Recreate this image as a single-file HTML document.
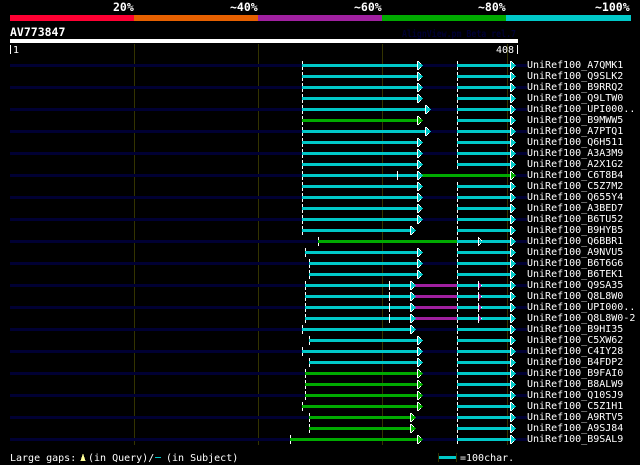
<!DOCTYPE html>
<html><head><meta charset="utf-8">
<style>
html,body{margin:0;padding:0;background:#000}
svg{display:block}
text{font-family:"DejaVu Sans Mono",monospace;font-size:10px;fill:#fff}
.b{font-weight:bold;font-size:11.5px}
.c{fill:#00c8c8}.g{fill:#00aa00}.p{fill:#a020a0}.w{fill:#fff}
</style></head><body>
<svg width="640" height="465" viewBox="0 0 640 465" xmlns="http://www.w3.org/2000/svg" shape-rendering="crispEdges">
<defs>
<rect id="n" x="10" y="0" width="517" height="3" fill="#000033"/>
<rect id="t" x="0" y="-3" width="1" height="9" fill="#fff"/>
<g id="wa"><rect y="-3" width="1" height="9" fill="#fff"/><rect x="1" y="-3" width="1" height="1" fill="#fff"/><rect x="2" y="-2" width="1" height="1" fill="#fff"/><rect x="3" y="-1" width="1" height="1" fill="#fff"/><rect x="4" y="0" width="1" height="1" fill="#fff"/><rect x="1" y="5" width="1" height="1" fill="#fff"/><rect x="2" y="4" width="1" height="1" fill="#fff"/><rect x="3" y="3" width="1" height="1" fill="#fff"/></g>
<g id="ac"><use href="#wa"/><g class="c"><rect x="1" y="-2" width="1" height="7"/><rect x="2" y="-1" width="1" height="5"/><rect x="3" y="0" width="1" height="3"/><rect x="4" y="1" width="2" height="1"/><rect x="4" y="0" width="1" height="3"/></g></g>
<g id="ag"><use href="#wa"/><g class="g"><rect x="1" y="-2" width="1" height="7"/><rect x="2" y="-1" width="1" height="5"/><rect x="3" y="0" width="1" height="3"/><rect x="4" y="1" width="2" height="1"/><rect x="4" y="0" width="1" height="3"/></g></g>
<g id="ap"><rect y="-3" width="1" height="9" fill="#fff"/><rect x="1" y="-1" width="1" height="5" class="p"/><rect x="2" y="0" width="1" height="3" class="p"/><rect x="3" y="1" width="1" height="1" fill="#fff"/></g>
<g id="aq"><rect y="-3" width="1" height="9" fill="#fff"/><rect x="1" y="-2" width="1" height="1" fill="#fff"/><rect x="2" y="-1" width="1" height="1" fill="#fff"/><rect x="3" y="0" width="1" height="1" fill="#fff"/><rect x="1" y="4" width="1" height="1" fill="#fff"/><rect x="2" y="3" width="1" height="1" fill="#fff"/></g>
<g id="s2"><use href="#t" x="457"/><rect x="457" width="53" height="3" class="c"/><use href="#ac" x="510"/></g>
</defs>
<rect width="640" height="465" fill="#000"/>
<rect x="10" y="15" width="124" height="6" fill="#ff0033"/>
<rect x="134" y="15" width="124" height="6" fill="#e66000"/>
<rect x="258" y="15" width="124" height="6" fill="#a020a0"/>
<rect x="382" y="15" width="124" height="6" fill="#00aa00"/>
<rect x="506" y="15" width="125" height="6" fill="#00c8c8"/>
<text class="b" x="113" y="11">20%</text>
<text class="b" x="230" y="11">~40%</text>
<text class="b" x="354" y="11">~60%</text>
<text class="b" x="478" y="11">~80%</text>
<text class="b" x="595" y="11">~100%</text>
<text class="b" x="10" y="36">AV773847</text>
<text x="402" y="37" textLength="114" lengthAdjust="spacingAndGlyphs" style="fill:#000033;font-weight:bold">AlignView.pm Beta rel.7</text>
<rect x="10" y="39" width="508" height="4" fill="#fff"/>
<rect x="10" y="45" width="1" height="9" fill="#fff"/>
<g fill="#333300"><rect x="134" y="44" width="1" height="401"/><rect x="258" y="44" width="1" height="401"/><rect x="382" y="44" width="1" height="401"/><rect x="507" y="44" width="1" height="401"/></g>
<text x="13" y="53">1</text>
<text x="496" y="53">408</text>
<rect x="517" y="45" width="1" height="9" fill="#fff"/>

<g transform="translate(0,64)"><use href="#n"/><use href="#t" x="302"/><rect x="302" width="115" height="3" class="c"/><use href="#ac" x="417"/><use href="#s2"/><text x="527" y="4">UniRef100_A7QMK1</text></g>
<g transform="translate(0,75)"><use href="#t" x="302"/><rect x="302" width="115" height="3" class="c"/><use href="#ac" x="417"/><use href="#s2"/><text x="527" y="4">UniRef100_Q9SLK2</text></g>
<g transform="translate(0,86)"><use href="#n"/><use href="#t" x="302"/><rect x="302" width="115" height="3" class="c"/><use href="#ac" x="417"/><use href="#s2"/><text x="527" y="4">UniRef100_B9RRQ2</text></g>
<g transform="translate(0,97)"><use href="#t" x="302"/><rect x="302" width="115" height="3" class="c"/><use href="#ac" x="417"/><use href="#s2"/><text x="527" y="4">UniRef100_Q9LTW0</text></g>
<g transform="translate(0,108)"><use href="#n"/><use href="#t" x="302"/><rect x="302" width="123" height="3" class="c"/><use href="#ac" x="425"/><use href="#s2"/><text x="527" y="4">UniRef100_UPI000..</text></g>
<g transform="translate(0,119)"><use href="#t" x="302"/><rect x="302" width="115" height="3" class="g"/><use href="#ag" x="417"/><use href="#s2"/><text x="527" y="4">UniRef100_B9MWW5</text></g>
<g transform="translate(0,130)"><use href="#n"/><use href="#t" x="302"/><rect x="302" width="123" height="3" class="c"/><use href="#ac" x="425"/><use href="#s2"/><text x="527" y="4">UniRef100_A7PTQ1</text></g>
<g transform="translate(0,141)"><use href="#t" x="302"/><rect x="302" width="115" height="3" class="c"/><use href="#ac" x="417"/><use href="#s2"/><text x="527" y="4">UniRef100_Q6H511</text></g>
<g transform="translate(0,152)"><use href="#n"/><use href="#t" x="302"/><rect x="302" width="115" height="3" class="c"/><use href="#ac" x="417"/><use href="#s2"/><text x="527" y="4">UniRef100_A3A3M9</text></g>
<g transform="translate(0,163)"><use href="#t" x="302"/><rect x="302" width="115" height="3" class="c"/><use href="#ac" x="417"/><use href="#s2"/><text x="527" y="4">UniRef100_A2X1G2</text></g>
<g transform="translate(0,174)"><use href="#n"/><use href="#t" x="302"/><rect x="302" width="115" height="3" class="c"/><use href="#t" x="397"/><rect x="422" width="88" height="3" class="g"/><use href="#ac" x="417"/><use href="#ag" x="510"/><text x="527" y="4">UniRef100_C6T8B4</text></g>
<g transform="translate(0,185)"><use href="#t" x="302"/><rect x="302" width="115" height="3" class="c"/><use href="#ac" x="417"/><use href="#s2"/><text x="527" y="4">UniRef100_C5Z7M2</text></g>
<g transform="translate(0,196)"><use href="#n"/><use href="#t" x="302"/><rect x="302" width="115" height="3" class="c"/><use href="#ac" x="417"/><use href="#s2"/><text x="527" y="4">UniRef100_Q655Y4</text></g>
<g transform="translate(0,207)"><use href="#t" x="302"/><rect x="302" width="115" height="3" class="c"/><use href="#ac" x="417"/><use href="#s2"/><text x="527" y="4">UniRef100_A3BED7</text></g>
<g transform="translate(0,218)"><use href="#n"/><use href="#t" x="302"/><rect x="302" width="115" height="3" class="c"/><use href="#ac" x="417"/><use href="#s2"/><text x="527" y="4">UniRef100_B6TU52</text></g>
<g transform="translate(0,229)"><use href="#t" x="302"/><rect x="302" width="108" height="3" class="c"/><use href="#ac" x="410"/><use href="#s2"/><text x="527" y="4">UniRef100_B9HYB5</text></g>
<g transform="translate(0,240)"><use href="#n"/><use href="#t" x="318"/><rect x="318" width="139" height="3" class="g"/><use href="#s2"/><use href="#aq" x="478"/><text x="527" y="4">UniRef100_Q6BBR1</text></g>
<g transform="translate(0,251)"><use href="#t" x="305"/><rect x="305" width="112" height="3" class="c"/><use href="#ac" x="417"/><use href="#s2"/><text x="527" y="4">UniRef100_A9NVU5</text></g>
<g transform="translate(0,262)"><use href="#n"/><use href="#t" x="309"/><rect x="309" width="108" height="3" class="c"/><use href="#ac" x="417"/><use href="#s2"/><text x="527" y="4">UniRef100_B6T6G6</text></g>
<g transform="translate(0,273)"><use href="#t" x="309"/><rect x="309" width="108" height="3" class="c"/><use href="#ac" x="417"/><use href="#s2"/><text x="527" y="4">UniRef100_B6TEK1</text></g>
<g transform="translate(0,284)"><use href="#n"/><use href="#t" x="305"/><rect x="305" width="105" height="3" class="c"/><use href="#t" x="389"/><rect x="415" width="42" height="3" class="p"/><use href="#ac" x="410"/><use href="#s2"/><use href="#ap" x="478"/><text x="527" y="4">UniRef100_Q9SA35</text></g>
<g transform="translate(0,295)"><use href="#t" x="305"/><rect x="305" width="105" height="3" class="c"/><use href="#t" x="389"/><rect x="415" width="42" height="3" class="p"/><use href="#ac" x="410"/><use href="#s2"/><use href="#ap" x="478"/><text x="527" y="4">UniRef100_Q8L8W0</text></g>
<g transform="translate(0,306)"><use href="#n"/><use href="#t" x="305"/><rect x="305" width="105" height="3" class="c"/><use href="#t" x="389"/><rect x="415" width="42" height="3" class="p"/><use href="#ac" x="410"/><use href="#s2"/><use href="#ap" x="478"/><text x="527" y="4">UniRef100_UPI000..</text></g>
<g transform="translate(0,317)"><use href="#t" x="305"/><rect x="305" width="105" height="3" class="c"/><use href="#t" x="389"/><rect x="415" width="42" height="3" class="p"/><use href="#ac" x="410"/><use href="#s2"/><use href="#ap" x="478"/><text x="527" y="4">UniRef100_Q8L8W0-2</text></g>
<g transform="translate(0,328)"><use href="#n"/><use href="#t" x="302"/><rect x="302" width="108" height="3" class="c"/><use href="#ac" x="410"/><use href="#s2"/><text x="527" y="4">UniRef100_B9HI35</text></g>
<g transform="translate(0,339)"><use href="#t" x="309"/><rect x="309" width="108" height="3" class="c"/><use href="#ac" x="417"/><use href="#s2"/><text x="527" y="4">UniRef100_C5XW62</text></g>
<g transform="translate(0,350)"><use href="#n"/><use href="#t" x="302"/><rect x="302" width="115" height="3" class="c"/><use href="#ac" x="417"/><use href="#s2"/><text x="527" y="4">UniRef100_C4IY28</text></g>
<g transform="translate(0,361)"><use href="#t" x="309"/><rect x="309" width="108" height="3" class="c"/><use href="#ac" x="417"/><use href="#s2"/><text x="527" y="4">UniRef100_B4FDP2</text></g>
<g transform="translate(0,372)"><use href="#n"/><use href="#t" x="305"/><rect x="305" width="112" height="3" class="g"/><use href="#ag" x="417"/><use href="#s2"/><text x="527" y="4">UniRef100_B9FAI0</text></g>
<g transform="translate(0,383)"><use href="#t" x="305"/><rect x="305" width="112" height="3" class="g"/><use href="#ag" x="417"/><use href="#s2"/><text x="527" y="4">UniRef100_B8ALW9</text></g>
<g transform="translate(0,394)"><use href="#n"/><use href="#t" x="305"/><rect x="305" width="112" height="3" class="g"/><use href="#ag" x="417"/><use href="#s2"/><text x="527" y="4">UniRef100_Q10SJ9</text></g>
<g transform="translate(0,405)"><use href="#t" x="302"/><rect x="302" width="115" height="3" class="g"/><use href="#ag" x="417"/><use href="#s2"/><text x="527" y="4">UniRef100_C5Z1H1</text></g>
<g transform="translate(0,416)"><use href="#n"/><use href="#t" x="309"/><rect x="309" width="101" height="3" class="g"/><use href="#ag" x="410"/><use href="#s2"/><text x="527" y="4">UniRef100_A9RTV5</text></g>
<g transform="translate(0,427)"><use href="#t" x="309"/><rect x="309" width="101" height="3" class="g"/><use href="#ag" x="410"/><use href="#s2"/><text x="527" y="4">UniRef100_A9SJ84</text></g>
<g transform="translate(0,438)"><use href="#n"/><use href="#t" x="290"/><rect x="290" width="127" height="3" class="g"/><use href="#ag" x="417"/><use href="#s2"/><text x="527" y="4">UniRef100_B9SAL9</text></g>

<text x="10" y="461">Large gaps:</text>
<polygon points="80.5,461 83,453 85.5,461" fill="#ffff99"/>
<text x="88" y="461">(in Query)/</text>
<rect x="155" y="457" width="6" height="1" class="c"/>
<text x="166" y="461">(in Subject)</text>
<rect x="438" y="453" width="1" height="9" fill="#333300"/>
<rect x="456" y="453" width="1" height="9" fill="#333300"/>
<rect x="439" y="456" width="17" height="3" class="c"/>
<text x="460" y="461">=100char.</text>
</svg>
</body></html>
